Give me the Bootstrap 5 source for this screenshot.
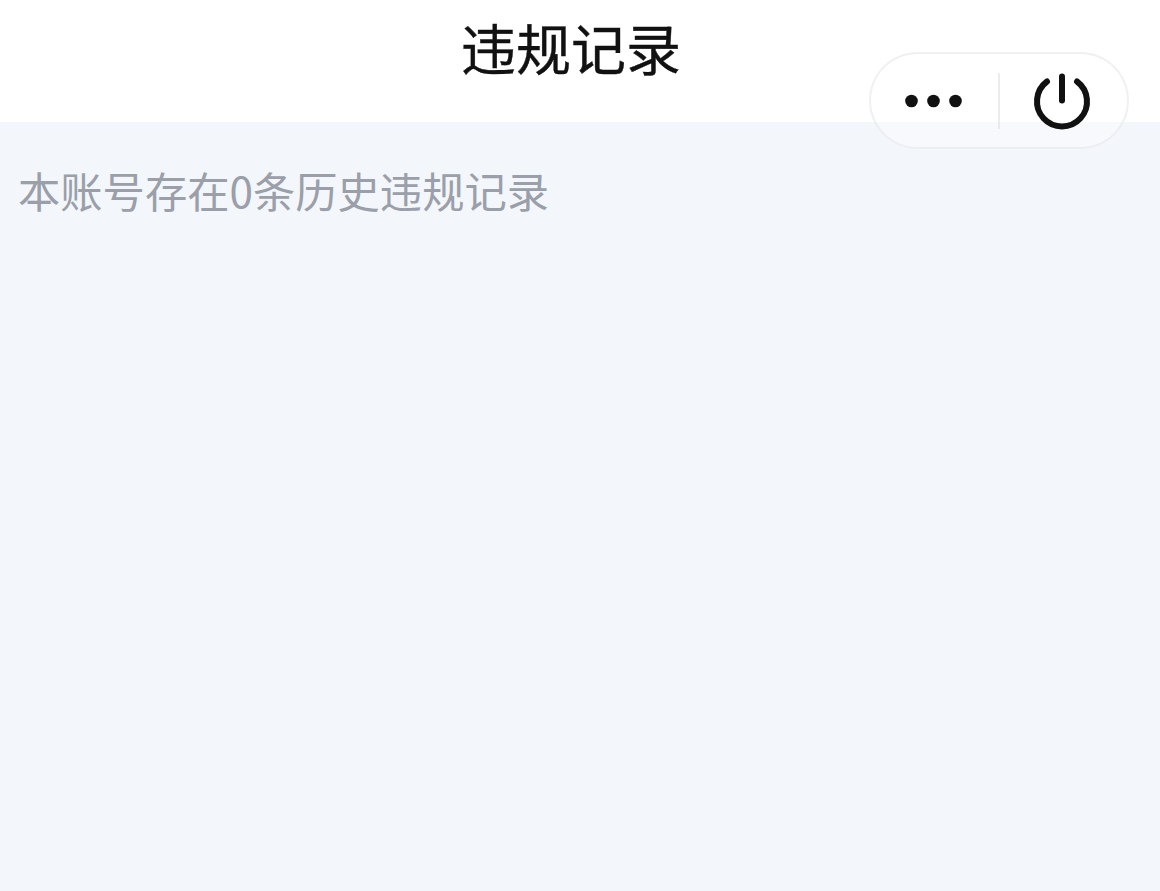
<!DOCTYPE html>
<html lang="zh"><head><meta charset="utf-8">
<link href="https://cdn.jsdelivr.net/npm/bootstrap@5.3.0/dist/css/bootstrap.min.css" rel="stylesheet">
<style>
html,body{height:100%;}
body{background:#f3f6fb;font-family:"Noto Sans CJK SC",sans-serif;overflow:hidden;}
.topbar{height:122px;background:#fff;font-size:55px;line-height:1;color:#111;padding:0 18px 29px 0;-webkit-text-stroke:.4px #111;}
.capsule{position:absolute;left:869px;top:52px;width:260px;height:97px;border-radius:49px;background:rgba(255,255,255,.35);border:2px solid rgba(225,228,233,.55);}
.capsule .divider{width:2px;height:56px;background:rgba(215,218,224,.5);}
.capsule .half-a{width:127px;}
.capsule .half-b{width:124px;}
.note{font-size:42.3px;line-height:1;color:#9a9fa9;padding:47px 0 0 18px;}
</style></head><body>
<div class="topbar d-flex align-items-center justify-content-center">违规记录</div>
<div class="capsule d-flex align-items-center">
<div class="half-a d-flex justify-content-center"><svg width="60" height="16" viewBox="0 0 60 16"><circle cx="6.5" cy="8" r="6.3" fill="#111"/><circle cx="28.5" cy="8" r="6.3" fill="#111"/><circle cx="50.5" cy="8" r="6.3" fill="#111"/></svg></div>
<div class="divider"></div>
<div class="half-b d-flex justify-content-center"><svg width="60" height="60" viewBox="0 0 60 60" fill="none" stroke="#111" stroke-width="6" stroke-linecap="round"><path d="M15 10.500A25 25 0 1 0 45 10.500"/><path d="M30 5.500V29.500"/></svg></div>
</div>
<div class="note">本账号存在0条历史违规记录</div>
<script src="https://cdn.jsdelivr.net/npm/bootstrap@5.3.0/dist/js/bootstrap.bundle.min.js"></script>
</body></html>
